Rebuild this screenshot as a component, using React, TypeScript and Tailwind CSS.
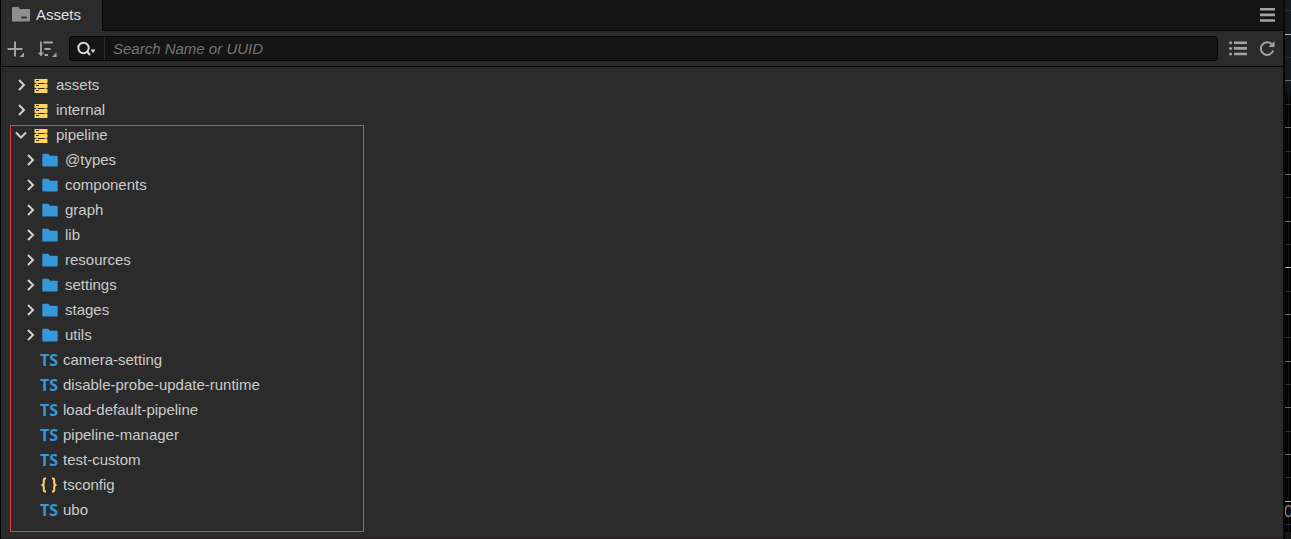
import React, { useState } from "react";

type Kind = "ts" | "json";

const folders = ["@types", "components", "graph", "lib", "resources", "settings", "stages", "utils"];
const files: { name: string; kind: Kind }[] = [
  { name: "camera-setting", kind: "ts" },
  { name: "disable-probe-update-runtime", kind: "ts" },
  { name: "load-default-pipeline", kind: "ts" },
  { name: "pipeline-manager", kind: "ts" },
  { name: "test-custom", kind: "ts" },
  { name: "tsconfig", kind: "json" },
  { name: "ubo", kind: "ts" },
];

function Chevron({ open }: { open?: boolean }) {
  return (
    <svg width="12" height="13" viewBox="0 0 12 13" fill="none" stroke="#d0d0d0" strokeWidth="2" className="shrink-0">
      <path d={open ? "M1 3.5 6 8.5 11 3.5" : "M4 1 9 6 4 11"} />
    </svg>
  );
}

function DbIcon() {
  return (
    <svg width="14" height="15" viewBox="0 0 14 15" className="shrink-0">
      <path d="M3 4v8M11.500 4v8" stroke="#c9a84e" strokeWidth="2" />
      {[1, 6, 11].map((y) => (
        <g key={y}>
          <rect x="0.5" y={y} width="13" height="4" rx="0.6" fill="#fdd55e" />
          <rect x="2" y={y + 1} width="3" height="1" fill="#3a3428" />
        </g>
      ))}
    </svg>
  );
}

function FolderIcon() {
  return (
    <svg width="16" height="15" viewBox="0 0 16 15" className="shrink-0">
      <path d="M1 .8h5.200l2 2H15q.7 0 .7.7v9.300q0 .7-.7.7H1q-.7 0-.7-.7V1.500Q.3.8 1 .8Z" fill="#3498db" />
    </svg>
  );
}

function JsonIcon() {
  return (
    <svg width="18" height="17" viewBox="0 0 18 17" fill="none" stroke="#fdd55e" strokeWidth="2" className="shrink-0">
      <path d="M6 1.500H5.300Q3.800 1.500 3.800 3.300V6Q3.800 8 1.500 8q2.300 0 2.300 2v2.700q0 1.800 1.500 1.800H6M12 1.500h.7q1.500 0 1.500 1.800V6q0 2 2.300 2-2.300 0-2.300 2v2.700q0 1.800-1.500 1.800H12" />
    </svg>
  );
}

function TsIcon() {
  return (
    <svg width="18" height="17" viewBox="0 0 18 17" aria-hidden="true" className="shrink-0 overflow-visible">
      <text x="9" y="14" textAnchor="middle" fontFamily="Open Sans, sans-serif" fontWeight="700" fontSize="16" fill="#3498db">
        TS
      </text>
    </svg>
  );
}

const rowClass = "flex h-[25px] w-full items-center text-left";

function RootRow({ name, open, onClick }: { name: string; open?: boolean; onClick?: () => void }) {
  return (
    <button type="button" aria-expanded={!!open} onClick={onClick} className={`${rowClass} pl-[14px]`}>
      <Chevron open={open} />
      <span className="mr-2 ml-[7px] flex"><DbIcon /></span>
      {name}
    </button>
  );
}

export default function App() {
  const [open, setOpen] = useState(true);
  return (
    <div className="flex min-h-screen bg-black pl-px font-['Liberation_Sans',Arial,sans-serif] text-[15px] text-[#cccccc]">
      <main className="flex min-w-0 flex-1 flex-col border-b-2 border-[#292226] bg-[#2b2b2b]">
        <header className="flex h-[31px] bg-[#141414]">
          <h1 className="flex w-[102px] items-center gap-[6px] border-r border-[#090909] bg-[#2b2b2b] pl-[11px] text-[#e0e0e0]">
            <svg width="18" height="17" viewBox="0 0 18 17" className="shrink-0">
              <path d="M1 0h5.500l1.500 2H17q1 0 1 1v10.500q0 1-1 1H1q-1 0-1-1V1q0-1 1-1Z" fill="#8f8f8f" />
              <rect x="9" y="9.5" width="6" height="2" rx="1" fill="#333333" />
            </svg>
            Assets
          </h1>
          <div className="flex flex-1 items-center justify-end border-b border-[#090909] pr-2">
            <button type="button" aria-label="Menu">
              <svg width="15" height="14" viewBox="0 0 15 14" fill="#a3a3a3">
                <path d="M0 0h15v2.600H0zM0 5.600h15v2.600H0zM0 11.200h15v2.600H0z" />
              </svg>
            </button>
          </div>
        </header>
        <div className="flex h-9 items-center border-b border-[#090909] pr-[7px] pl-[6px]">
          <button type="button" aria-label="Create">
            <svg width="18" height="18" viewBox="0 0 18 18">
              <path d="M.5 9h15M8 1.500v15" stroke="#a3a3a3" strokeWidth="2" />
              <path d="M17 12.500v4.500H12.500z" fill="#a3a3a3" />
            </svg>
          </button>
          <button type="button" aria-label="Sort" className="ml-3">
            <svg width="20" height="18" viewBox="0 0 20 18">
              <path d="M4 1.500v12M6.500 2.500h9.500M7.500 9h6M7.500 15h3.500" fill="none" stroke="#a3a3a3" strokeWidth="1.800" />
              <path d="M1 12.500h6L4 16.500z" fill="#a3a3a3" />
              <path d="M19.500 12.500v4.500H15z" fill="#a3a3a3" />
            </svg>
          </button>
          <div className="ml-3 flex h-[25px] flex-1 overflow-hidden rounded-[3px] border border-[#080808] bg-[#141414]">
            <button type="button" aria-label="Search by" className="flex w-[35px] items-center justify-center border-r border-[#2b2b2b]">
              <svg width="21" height="17" viewBox="0 0 21 17">
                <circle cx="6.500" cy="8" r="5.200" fill="none" stroke="#d8d8d8" strokeWidth="2" />
                <path d="m10 11.500 3 3.500" stroke="#d8d8d8" strokeWidth="2" />
                <path d="M13.500 9.500h5L16 13z" fill="#d8d8d8" />
              </svg>
            </button>
            <input
              aria-label="Search assets"
              placeholder="Search Name or UUID"
              className="min-w-0 flex-1 bg-transparent px-2 pt-0.5 italic outline-none placeholder:text-[#757575]"
            />
          </div>
          <button type="button" aria-label="List view" className="ml-[11px]">
            <svg width="18" height="15" viewBox="0 0 18 15" fill="#a3a3a3">
              <path d="M5 .5h13v2.600H5zM5 6.100h13v2.600H5zM5 11.700h13v2.600H5z" />
              <circle cx="1.600" cy="1.800" r="1.500" />
              <circle cx="1.600" cy="7.400" r="1.500" />
              <circle cx="1.600" cy="13" r="1.500" />
            </svg>
          </button>
          <button type="button" aria-label="Refresh" className="ml-3">
            <svg width="17" height="17" viewBox="0 0 17 17">
              <path d="M14.200 10.500A6.300 6.300 0 1 1 12.500 4" fill="none" stroke="#a3a3a3" strokeWidth="2" />
              <path d="M15.500 1v6h-6z" fill="#a3a3a3" />
            </svg>
          </button>
        </div>
        <nav aria-label="Assets" className="pt-[6px]">
          <RootRow name="assets" />
          <RootRow name="internal" />
          <section className="relative">
            <RootRow name="pipeline" open={open} onClick={() => setOpen(!open)} />
            {open && (
              <>
                {folders.map((name) => (
                  <button key={name} type="button" aria-expanded={false} className={`${rowClass} pl-[23px]`}>
                    <Chevron />
                    <span className="mr-[7px] ml-[6px] flex"><FolderIcon /></span>
                    {name}
                  </button>
                ))}
                {files.map(({ name, kind }) => (
                  <button key={name} type="button" className={`${rowClass} gap-[5px] pl-[39px]`}>
                    {kind === "json" ? <JsonIcon /> : <TsIcon />}
                    {name}
                  </button>
                ))}
              </>
            )}
            <div className="pointer-events-none absolute top-[2px] -bottom-[9px] left-[9px] w-[354px] border border-[#f03e37]" />
          </section>
        </nav>
      </main>
      <aside className="flex w-2 shrink-0 border-l-2 border-[#080808] bg-black">
        <svg width="6" height="539" viewBox="0 0 6 539">
          <defs>
            <linearGradient id="glow" x2="0" y2="1">
              <stop offset="0.800" stopColor="#131c21" />
              <stop offset="1" stopColor="#000000" />
            </linearGradient>
          </defs>
          <rect width="6" height="104" fill="url(#glow)" />
          <path d="M3.500 0v532" stroke="#191919" />
          {Array.from({ length: 23 }, (_, i) => {
            const y = Math.round(10.4 + i * 23.35);
            const color = i % 10 === 1 ? "#b0b0b0" : i % 2 ? "#666666" : "#2b2b2b";
            return <rect key={i} y={y} width="6" height="1" fill={color} />;
          })}
          <text x="-1" y="517" fontSize="16" fill="#888888">0</text>
          <rect y="532" width="6" height="7" fill="#161616" />
        </svg>
      </aside>
    </div>
  );
}
